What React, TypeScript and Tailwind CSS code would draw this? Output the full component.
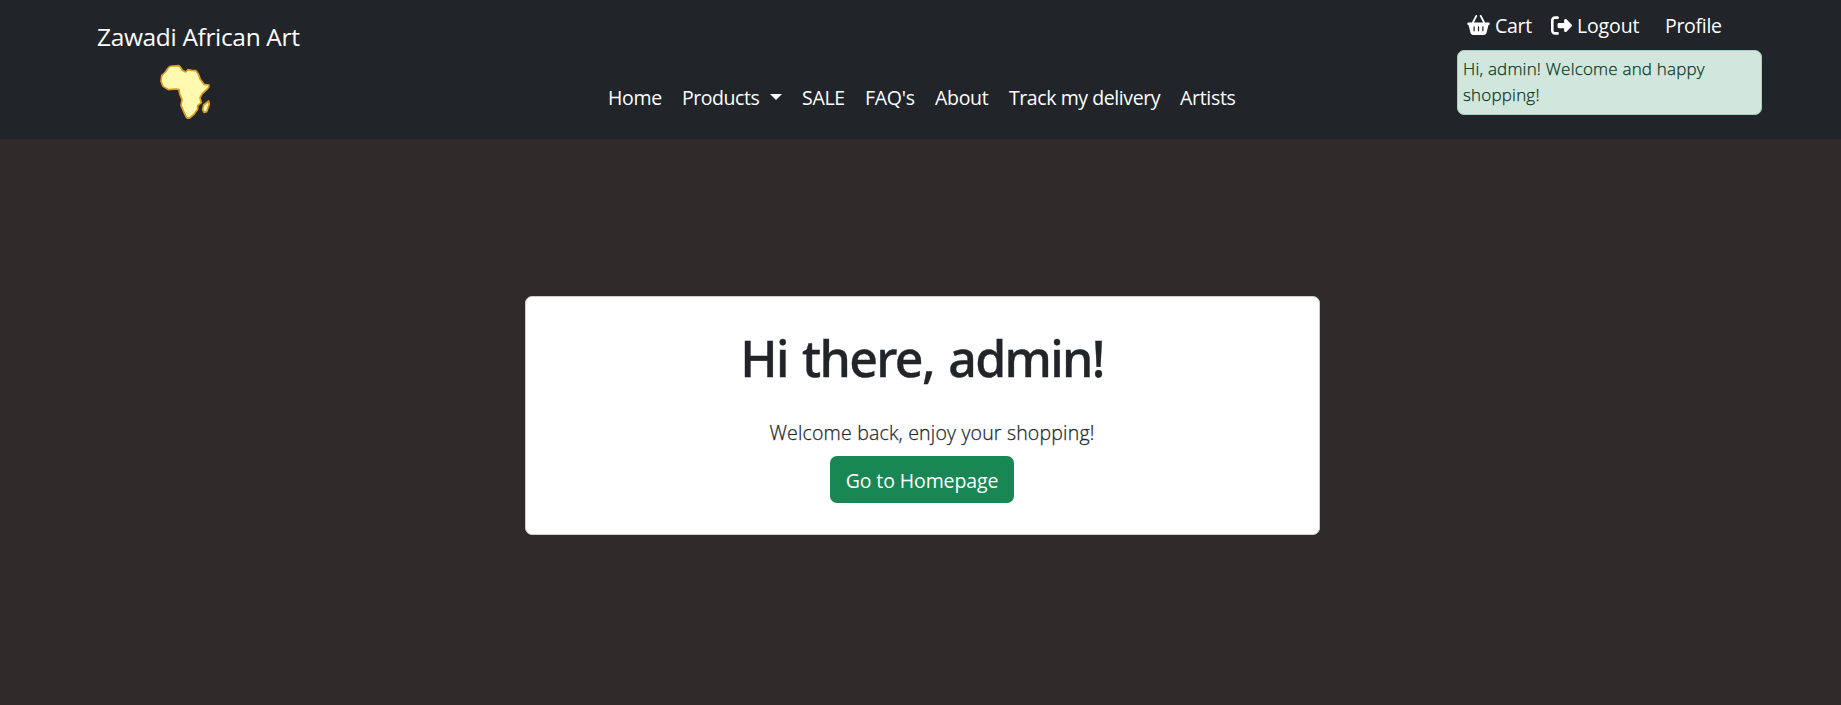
import { FaBasketShopping, FaRightFromBracket } from "react-icons/fa6";

function AfricaLogo() {
  return (
    <svg viewBox="0 0 180 186" className="ml-[58px] block h-[62px] w-[60px]" aria-hidden="true">
      <g fill="#fffab0" stroke="#d89a26" strokeWidth="5" strokeLinejoin="round">
        <path d="M40 23 Q44 18 50 18 L72 17 L79 25 L82 31 L92 36 L99 29 L110 31 L123 32 L130 42 L136 58 L147 73 L162 75 Q163 80 158 86 L142 101 L135 113 L139 128 L128 137 L128 148 L117 163 L105 173 Q98 177 94 172 L86 155 L78 136 L81 119 L74 102 L72 89 L63 87 L40 89 L24 79 L18 64 L20 47 L31 36 Z" />
        <path d="M161 123 L163 133 L155 155 L147 157 L143 149 L146 135 Z" />
      </g>
    </svg>
  );
}

export default function App() {
  return (
    <div className="h-[705px] w-full overflow-hidden bg-[#2f2b2a] font-['Open_Sans',sans-serif] text-[#212529]">
      <header className="flex h-[139px] items-start bg-[#212529] text-white">
        <div className="w-[608px] shrink-0 pl-[97px] pt-[17px]">
          <a className="block h-[43px] whitespace-nowrap text-[24.5px] leading-[40px] tracking-[-0.34px]">Zawadi African Art</a>
          <AfricaLogo />
        </div>
        <nav className="flex w-[849px] shrink-0 whitespace-nowrap pt-[83px] text-[19.5px] leading-[30px] tracking-[-0.3px]">
          <a className="w-[74px]">Home</a>
          <a className="flex w-[120px] items-center tracking-[-0.45px]">
            Products
            <span className="ml-[11px] mt-[-3px] border-x-[6px] border-t-[6px] border-x-transparent border-t-white" />
          </a>
          <a className="w-[63px]">SALE</a>
          <a className="w-[70px]">FAQ's</a>
          <a className="w-[74px]">About</a>
          <a className="w-[171px] tracking-[-0.42px]">Track my delivery</a>
          <a>Artists</a>
        </nav>
        <div className="w-[305px] shrink-0">
          <div className="flex h-[50px] whitespace-nowrap pl-[10px] pt-[11px] text-[19.5px] leading-[30px] tracking-[-0.3px]">
            <a className="flex w-[84px]">
              <FaBasketShopping className="mr-[5px] mt-[4px] h-[20px] w-[23px]" />
              Cart
            </a>
            <a className="flex w-[114px] tracking-[-0.15px]">
              <FaRightFromBracket className="mr-[5px] mt-[4px] h-[21px] w-[21px]" />
              Logout
            </a>
            <a>Profile</a>
          </div>
          <div className="h-[65px] rounded-[7px] border border-[#a3cfbb] bg-[#d1e7dd] pl-[5px] pt-[5px] text-[17px] font-light leading-[26px] tracking-[0.19px] text-[#0a3622] [-webkit-text-stroke:0.25px_currentColor]">
            Hi, admin! Welcome and happy
            <br />
            shopping!
          </div>
        </div>
      </header>
      <main className="pl-[525px] pt-[157px]">
        <section className="flex h-[239px] w-[795px] flex-col items-center rounded-[7px] border border-[#cfcecd] bg-white">
          <h1 className="mr-px mt-[31px] h-[60px] whitespace-nowrap font-['Noto_Sans','Open_Sans',sans-serif] text-[50px] font-medium leading-[60px] tracking-[-1.65px] [-webkit-text-stroke:0.4px_currentColor] [word-spacing:3px]">Hi there, admin!</h1>
          <p className="ml-[19px] mt-[30px] h-[30px] whitespace-nowrap text-[19.5px] font-light leading-[30px] tracking-[0.19px] [-webkit-text-stroke:0.25px_currentColor]">
            Welcome back, enjoy your shopping!
          </p>
          <button className="mr-px mt-[8px] h-[47px] w-[184px] whitespace-nowrap rounded-[7px] bg-[#198754] text-[19.5px] leading-[49px] tracking-[-0.1px] text-white">
            Go to Homepage
          </button>
        </section>
      </main>
    </div>
  );
}
